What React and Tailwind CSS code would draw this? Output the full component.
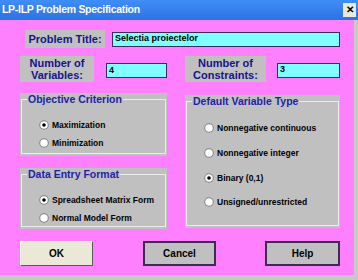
import React from 'react';

function Radio({ checked }) {
    return (
        <svg width="10" height="10" viewBox="0 0 12 12" className="shrink-0">
            <circle cx="6" cy="6" r="5.7" fill="#808080" />
            <circle cx="6" cy="6" r="4.5" fill="#ffffff" />
            {checked && <circle cx="6" cy="6" r="2.2" fill="#000000" />}
        </svg>
    );
}

function Option({ label, checked, className = '' }) {
    return (
        <div className={`flex items-center gap-[3px] ${className}`}>
            <Radio checked={checked} />
            <span className="text-[8.5px] font-bold text-black leading-none whitespace-nowrap">{label}</span>
        </div>
    );
}

function Group({ title, className = '', children }) {
    return (
        <div className={`bg-[#c0c0c0] px-[1px] pt-[6px] pb-[2px] flex ${className}`}>
            <div className="flex-1 border border-[#ececec] flex flex-col">
                <div className="-mt-[7px] ml-[5px] w-fit bg-[#c0c0c0] px-[1px] text-[10.5px] font-bold text-[#1f1fa8] leading-[12px] whitespace-nowrap">{title}</div>
                <div className="pl-[15px] flex flex-col">{children}</div>
            </div>
        </div>
    );
}

function Label({ children, className = '' }) {
    return (
        <div className={`bg-[#c0c0c0] flex items-center justify-center text-center text-[11px] font-bold text-[#14148c] leading-[12px] ${className}`}>
            {children}
        </div>
    );
}

function Field({ value, className = '' }) {
    return (
        <div className={`bg-[#80ffff] border border-[#3d2b5e] h-[15px] flex items-center pl-[2px] text-[9px] font-bold text-black ${className}`}>
            {value}
        </div>
    );
}

export default function App() {
    return (
        <div className="w-[358px] h-[280px] bg-[#ff80ff] flex flex-col font-['Liberation_Sans',Arial,sans-serif] overflow-hidden">
            {/* Title bar */}
            <div className="h-[20px] shrink-0 bg-gradient-to-b from-[#3f8ef7] to-[#2c72e4] flex items-center justify-between pl-[2px] pr-[2px]">
                <span className="text-white font-bold text-[10.5px] tracking-[-0.3px]">LP-ILP Problem Specification</span>
                <div className="w-[13px] h-[14px] bg-[#ece9d8] flex items-center justify-center text-[10px] font-bold text-black leading-none">✕</div>
            </div>

            <div className="flex flex-1">
                <div className="flex-1 pl-[20px] flex flex-col">
                    {/* Problem title */}
                    <div className="flex items-center mt-[10px]">
                        <Label className="ml-[5px] w-[80px] h-[18px]">Problem Title:</Label>
                        <Field value="Selectia proiectelor" className="ml-[7px] w-[228px]" />
                    </div>

                    {/* Counts */}
                    <div className="flex items-center mt-[8px]">
                        <Label className="w-[74px] h-[26px]">Number of<br />Variables:</Label>
                        <Field value="4" className="ml-[12px] w-[61px] mt-[3px]" />
                        <Label className="ml-[18px] w-[81px] h-[26px]">Number of<br />Constraints:</Label>
                        <Field value="3" className="ml-[11px] w-[63px] mt-[2px]" />
                    </div>

                    {/* Groups */}
                    <div className="flex mt-[11px]">
                        <div className="w-[147px] flex flex-col">
                            <Group title="Objective Criterion" className="h-[63px]">
                                <Option label="Maximization" checked className="mt-[15px] ml-[2px]" />
                                <Option label="Minimization" className="mt-[8px] ml-[2px]" />
                            </Group>
                            <Group title="Data Entry Format" className="h-[61px] mt-[12px]">
                                <Option label="Spreadsheet Matrix Form" checked className="mt-[15px] ml-[2px]" />
                                <Option label="Normal Model Form" className="mt-[8px] ml-[2px]" />
                            </Group>
                        </div>
                        <Group title="Default Variable Type" className="ml-[18px] w-[155px] h-[133px] mt-[2px]">
                            <Option label="Nonnegative continuous" className="mt-[16px] ml-[2px]" />
                            <Option label="Nonnegative integer" className="mt-[15px] ml-[2px]" />
                            <Option label="Binary (0,1)" checked className="mt-[15px] ml-[2px]" />
                            <Option label="Unsigned/unrestricted" className="mt-[14px] ml-[2px]" />
                        </Group>
                    </div>

                    {/* Buttons */}
                    <div className="flex mt-[12px]">
                        <button className="w-[73px] h-[25px] bg-[#ebe8d8] border border-t-white border-l-white border-r-[#5a5a5a] border-b-[#5a5a5a] text-[10px] font-bold text-black">OK</button>
                        <button className="ml-[50px] w-[73px] h-[25px] bg-[#c0c0c0] border-2 border-[#3e2b50] text-[10px] font-bold text-black">Cancel</button>
                        <button className="ml-[49px] w-[75px] h-[25px] bg-[#c0c0c0] border-2 border-[#3e2b50] text-[10px] font-bold text-black">Help</button>
                    </div>
                </div>
                <div className="w-[4px] bg-[#c8c8c8]" />
            </div>
            <div className="h-[5px] shrink-0 bg-[#c8c8c8]" />
        </div>
    );
}
